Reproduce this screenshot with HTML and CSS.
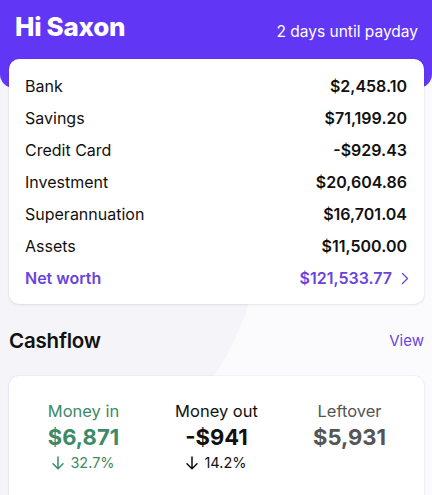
FILE: index.html
```html
<!DOCTYPE html>
<html>
<head>
<meta charset="utf-8">
<link rel="stylesheet" href="styles.css">
</head>
<body>
<div class="page">
  <div class="bg-circle"></div>
  <header class="header">
    <h1 class="greeting">Hi Saxon</h1>
    <span class="payday">2 days until payday</span>
  </header>
  <section class="card accounts">
    <div class="row"><span>Bank</span><span class="val">$2,458.10</span></div>
    <div class="row"><span>Savings</span><span class="val">$71,199.20</span></div>
    <div class="row"><span>Credit Card</span><span class="val">-$929.43</span></div>
    <div class="row"><span>Investment</span><span class="val">$20,604.86</span></div>
    <div class="row"><span>Superannuation</span><span class="val">$16,701.04</span></div>
    <div class="row"><span>Assets</span><span class="val">$11,500.00</span></div>
    <div class="row net"><span>Net worth</span><span class="val net-val">$121,533.77
      <svg class="chev" width="8" height="13" viewBox="0 0 8 13"><path d="M1.5 1.5 L6.5 6.5 L1.5 11.5" fill="none" stroke="currentColor" stroke-width="1.3" stroke-linecap="round" stroke-linejoin="round"/></svg></span></div>
  </section>
  <div class="section-head">
    <h2 class="section-title">Cashflow</h2>
    <a class="view">View</a>
  </div>
  <section class="card cashflow">
    <div class="col in">
      <div class="label">Money in</div>
      <div class="amount">$6,871</div>
      <div class="pct"><svg width="12" height="14" viewBox="0 0 12 14"><path d="M6 1 V12.5 M1 7.8 L6 12.8 L11 7.8" fill="none" stroke="currentColor" stroke-width="1.5" stroke-linecap="round" stroke-linejoin="round"/></svg>32.7%</div>
    </div>
    <div class="col out">
      <div class="label">Money out</div>
      <div class="amount">-$941</div>
      <div class="pct"><svg width="12" height="14" viewBox="0 0 12 14"><path d="M6 1 V12.5 M1 7.8 L6 12.8 L11 7.8" fill="none" stroke="currentColor" stroke-width="1.5" stroke-linecap="round" stroke-linejoin="round"/></svg>14.2%</div>
    </div>
    <div class="col left">
      <div class="label">Leftover</div>
      <div class="amount">$5,931</div>
    </div>
  </section>
</div>
</body>
</html>
```
FILE: styles.css
```css
* { box-sizing: border-box; }
html, body { margin: 0; padding: 0; }
body {
  width: 432px;
  height: 495px;
  overflow: hidden;
  background: #fbfbfd;
  font-family: Inter, "Noto Sans", "Liberation Sans", sans-serif;
  color: #111;
}
.page {
  position: relative;
  height: 495px;
  overflow: hidden;
}
.bg-circle {
  position: absolute;
  left: -386px;
  top: -126px;
  width: 652px;
  height: 652px;
  border-radius: 50%;
  background: #f4f4f9;
  z-index: 0;
}
.header {
  position: relative;
  z-index: 1;
  height: 88px;
  background: #6236f5;
  border-radius: 0 0 14px 14px;
  display: flex;
  justify-content: space-between;
  align-items: flex-start;
  padding: 12px 14px 0 15px;
  color: #fff;
}
.greeting {
  margin: 0;
  font-size: 26px;
  font-weight: 800;
  line-height: 30px;
  letter-spacing: -0.3px;
}
.payday {
  font-size: 15.5px;
  line-height: 20px;
  margin-top: 10px;
  font-weight: 400;
}
.card {
  position: relative;
  z-index: 1;
  background: #fff;
  border-radius: 10px;
  margin: 0 8px 0 9px;
  box-shadow: 0 1px 3px rgba(40, 40, 80, 0.08), 0 0 0 1px rgba(40, 40, 80, 0.03);
}
.accounts {
  margin-top: -29px;
  padding: 11px 17px 10px 16px;
}
.row {
  display: flex;
  justify-content: space-between;
  align-items: center;
  height: 32px;
  font-size: 16px;
}
.val { font-weight: 600; }
.net { color: #6a43df; font-weight: 600; }
.net-val { display: flex; align-items: center; gap: 9px; margin-right: -2px; }
.chev { display: block; }
.section-head {
  position: relative;
  z-index: 1;
  display: flex;
  justify-content: space-between;
  align-items: center;
  height: 72px;
  padding: 0 8px 0 9px;
}
.section-title {
  margin: 0;
  font-size: 20.5px;
  font-weight: 600;
  letter-spacing: -0.2px;
}
.view {
  color: #6a43df;
  font-size: 15px;
  cursor: pointer;
}
.cashflow {
  display: grid;
  grid-template-columns: repeat(3, 1fr);
  padding: 24px 8px 0 8px;
  height: 140px;
}
.col {
  display: flex;
  flex-direction: column;
  align-items: center;
}
.label {
  font-size: 16.5px;
  line-height: 22px;
}
.amount {
  font-size: 22px;
  font-weight: 700;
  line-height: 30px;
}
.pct {
  display: flex;
  align-items: center;
  gap: 6px;
  font-size: 14.5px;
  line-height: 20px;
  margin-top: 1px;
}
.pct svg { display: block; }
.in { color: #3d8a66; }
.out { color: #111; }
.left { color: #555; }
```
